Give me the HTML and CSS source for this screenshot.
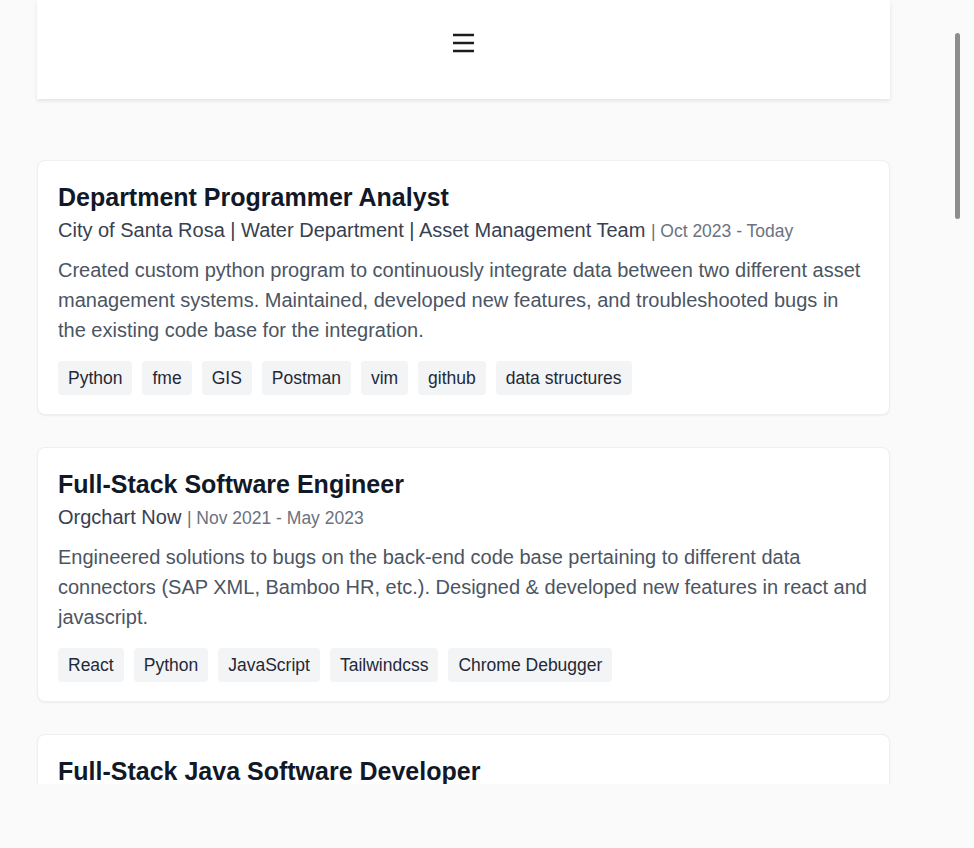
FILE: index.html
```html
<!DOCTYPE html>
<html lang="en">
<head>
<meta charset="utf-8">
<title>Experience</title>
<link rel="stylesheet" href="styles.css">
</head>
<body>
<div class="page">
  <header class="topbar">
    <button class="menu-btn" aria-label="Open menu">
      <svg width="22" height="20" viewBox="0 0 22 20" aria-hidden="true">
        <path d="M1 2H22M1 10H22M1 18H22" stroke="#1c1c1c" stroke-width="2.5" fill="none"/>
      </svg>
    </button>
  </header>

  <main class="jobs">
    <article class="card">
      <h2 class="title">Department Programmer Analyst</h2>
      <p class="sub">City of Santa Rosa | Water Department | Asset Management Team <span class="date">| Oct 2023 - Today</span></p>
      <p class="desc">Created custom python program to continuously integrate data between two different asset management systems. Maintained, developed new features, and troubleshooted bugs in the existing code base for the integration.</p>
      <ul class="tags">
        <li>Python</li><li>fme</li><li>GIS</li><li>Postman</li><li>vim</li><li>github</li><li>data structures</li>
      </ul>
    </article>

    <article class="card">
      <h2 class="title">Full-Stack Software Engineer</h2>
      <p class="sub">Orgchart Now <span class="date">| Nov 2021 - May 2023</span></p>
      <p class="desc">Engineered solutions to bugs on the back-end code base pertaining to different data connectors (SAP XML, Bamboo HR, etc.). Designed &amp; developed new features in react and javascript.</p>
      <ul class="tags">
        <li>React</li><li>Python</li><li>JavaScript</li><li>Tailwindcss</li><li>Chrome Debugger</li>
      </ul>
    </article>

    <article class="card">
      <h2 class="title">Full-Stack Java Software Developer</h2>
    </article>
  </main>
</div>
<div class="fade"></div>
<div class="scroll-thumb"></div>
</body>
</html>
```

FILE: styles.css
```css
html, body {
  margin: 0;
  padding: 0;
  height: 100%;
  overflow: hidden;
}
body {
  background: #fafafa;
  font-family: "Liberation Sans", Arial, sans-serif;
  color: #111827;
}
.page {
  margin-left: 37px;
  width: 853px;
}
.topbar {
  height: 99px;
  background: #fff;
  box-shadow: 0 2px 4px rgba(0,0,0,0.09);
  display: flex;
  justify-content: center;
  align-items: flex-start;
  padding-top: 33px;
  box-sizing: border-box;
}
.menu-btn {
  border: 0;
  background: none;
  padding: 0;
  width: 22px;
  height: 20px;
  margin-left: -1px;
  display: block;
}
.menu-btn svg { display: block; }
.jobs {
  margin-top: 61px;
  display: flex;
  flex-direction: column;
  gap: 32px;
}
.card {
  background: #fff;
  border: 1px solid #efefef;
  border-radius: 8px;
  box-shadow: 0 1px 2px rgba(0,0,0,0.05);
  padding: 20px 20px 19px;
}
.title {
  margin: 0;
  font-size: 25px;
  line-height: 32px;
  font-weight: 700;
  color: #111827;
}
.sub {
  margin: 3px 0 0;
  font-size: 20px;
  line-height: 28px;
  color: #374151;
}
.date {
  font-size: 17.5px;
  color: #6b7280;
}
.desc {
  margin: 10px 0 0;
  font-size: 20px;
  line-height: 30px;
  color: #4b5563;
}
.tags {
  list-style: none;
  margin: 16px 0 0;
  padding: 0;
  display: flex;
  flex-wrap: wrap;
  gap: 10px;
}
.tags li {
  background: #f3f4f6;
  border-radius: 4px;
  padding: 5px 10px;
  font-size: 17.5px;
  line-height: 24px;
  color: #1f2937;
}
.fade {
  position: fixed;
  left: 0;
  right: 0;
  top: 784px;
  bottom: 0;
  background: #fafafa;
}
.scroll-thumb {
  position: fixed;
  left: 955px;
  top: 33px;
  width: 5px;
  height: 186px;
  border-radius: 3px;
  background: #8d8d8d;
}
```
